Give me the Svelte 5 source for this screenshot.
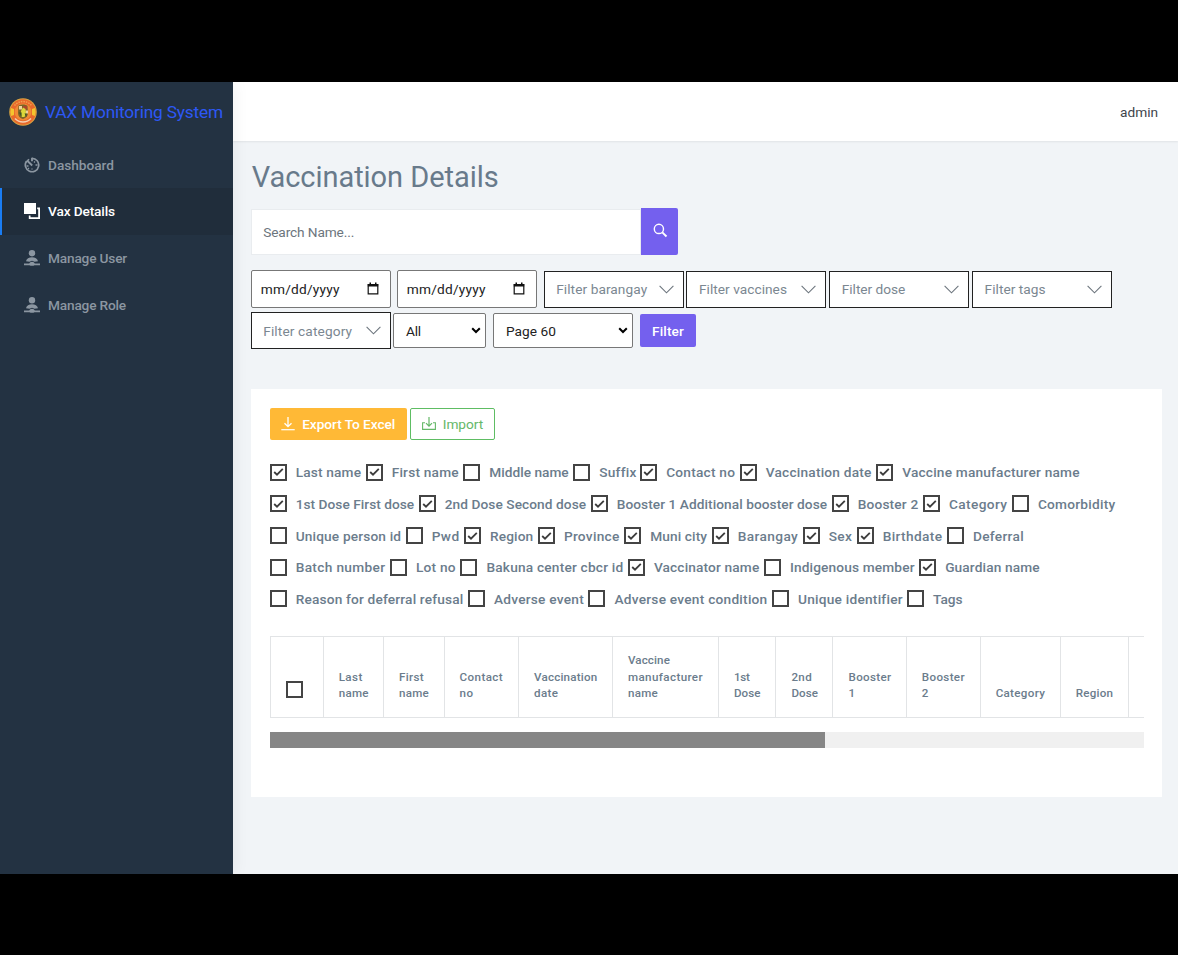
<script>
  const nav = [
    { label: 'Dashboard', icon: 'gauge', w: 66 },
    { label: 'Vax Details', icon: 'layers', w: 67, active: true },
    { label: 'Manage User', icon: 'person', w: 79 },
    { label: 'Manage Role', icon: 'person', w: 78 }
  ];

  const filters = [
    { label: 'Filter barangay', w: 91 },
    { label: 'Filter vaccines', w: 88 },
    { label: 'Filter dose', w: 63.5 },
    { label: 'Filter tags', w: 61 }
  ];

  // [label, slot width, checked]
  const rows = [
    [['Last name', 96, 1], ['First name', 97.6, 1], ['Middle name', 109.9, 0], ['Suffix', 67, 0], ['Contact no', 99.5, 1], ['Vaccination date', 136.5, 1], ['Vaccine manufacturer name', 208, 1]],
    [['1st Dose First dose', 149, 1], ['2nd Dose Second dose', 172, 1], ['Booster 1 Additional booster dose', 241, 1], ['Booster 2', 91.2, 1], ['Category', 89, 1], ['Comorbidity', 108, 0]],
    [['Unique person id', 136, 0], ['Pwd', 58.3, 0], ['Region', 73.9, 1], ['Province', 86.3, 1], ['Muni city', 87.5, 1], ['Barangay', 91, 1], ['Sex', 54, 1], ['Birthdate', 90.3, 1], ['Deferral', 81.5, 0]],
    [['Batch number', 120.2, 0], ['Lot no', 70.5, 0], ['Bakuna center cbcr id', 167.5, 0], ['Vaccinator name', 136, 1], ['Indigenous member', 155.3, 0], ['Guardian name', 125, 1]],
    [['Reason for deferral refusal', 198.3, 0], ['Adverse event', 120.5, 0], ['Adverse event condition', 183.5, 0], ['Unique identifier', 135, 0], ['Tags', 60, 0]]
  ];

  // column width, then [word, width] per line
  const columns = [
    [60.4, [['Last', 24], ['name', 30]]],
    [60.5, [['First', 25], ['name', 30]]],
    [74.4, [['Contact', 43.5], ['no', 14]]],
    [94, [['Vaccination', 63.5], ['date', 24.5]]],
    [106, [['Vaccine', 42], ['manufacturer', 75], ['name', 30]]],
    [57.5, [['1st', 15.5], ['Dose', 26.5]]],
    [57, [['2nd', 20.5], ['Dose', 26.5]]],
    [73.4, [['Booster', 43], ['1', 6]]],
    [73.8, [['Booster', 43], ['2', 7]]],
    [80, [['Category', 49.5]]],
    [68, [['Region', 37.5]]]
  ];

  // Tracks the letters so that a label fills the given width.
  function fit(node, width) {
    node.style.letterSpacing = '0px';
    const natural = node.getBoundingClientRect().width;
    node.style.letterSpacing = (width - natural) / node.textContent.length + 'px';
  }
</script>

{#snippet box(checked)}
  <span class="box">
    {#if checked}
      <svg width="11" height="10" viewBox="0 0 11 10"><path d="M1.2 5 4 7.7 9.8 1.8" fill="none" stroke="#3c3c3c" stroke-width="1.8" /></svg>
    {/if}
  </span>
{/snippet}

{#snippet dropdown(label, w)}
  <div class="filter">
    <span use:fit={w}>{label}</span>
    <svg width="15" height="9" viewBox="0 0 15 9"><path d="M.6.8 7.5 7.8 14.4.8" fill="none" stroke="#6c757d" stroke-width="1.1" /></svg>
  </div>
{/snippet}

{#snippet caret()}
  <svg width="10" height="7" viewBox="0 0 10 7"><path d="M1.2 1.2 5 5 8.8 1.2" fill="none" stroke="#000" stroke-width="2" /></svg>
{/snippet}

<div class="screen">
  <div class="app">
    <aside>
      <div class="brand">
        <svg width="28" height="28" viewBox="0 0 28 28">
          <circle cx="14" cy="14" r="13.8" fill="#d9a441" />
          <circle cx="14" cy="14" r="12.8" fill="#e8692c" />
          <path d="M2 10a12.6 12.6 0 0 0 0 8l3-1v-6zM26 10a12.6 12.6 0 0 1 0 8l-3-1v-6z" fill="#f4c52e" />
          <path d="M5.5 7.5A11 11 0 0 1 22.5 7.5" fill="none" stroke="#f0a050" stroke-width="1.5" stroke-dasharray="1.5 1" />
          <path d="M6 20.5A11 11 0 0 0 22 20.5" fill="none" stroke="#f5d0b0" stroke-width="1.6" />
          <circle cx="14" cy="14" r="8.4" fill="#f08a35" />
          <path d="M9.500 7.500c3-1.500 7-1.500 9 .5l.5 7c0 3-2 5-5 6-3-1-5-2.500-5-6z" fill="#7a6428" />
          <path d="M10 8h3v3.500h-3zM16.500 12.500h2.500v3h-2z" fill="#ecd29a" />
          <path d="M14 8h4v3.500h-4z" fill="#a9452c" />
          <path d="M12 13l2-3.500 2.500 1.500.500 4-1.500 4h-3z" fill="#dcd83a" />
          <path d="M10 14.500h2.500v4.500zM15.500 15.500h2v3.500z" fill="#3a5528" />
        </svg>
        <span use:fit={178}>VAX Monitoring System</span>
      </div>
      <nav>
        {#each nav as item}
          <div class="item" class:active={item.active}>
            {#if item.icon === 'gauge'}
              <svg width="16" height="16" viewBox="0 0 16 16" fill="none" stroke="currentColor">
                <path d="M8 1.3A6.7 6.700 0 1 1 2.500 4.200" stroke-width="1.700" />
                <path d="M8 .8v3.500M3 3.500 8.200 8.500" stroke-width="1.900" />
                <path d="M5 2.200 2 5.200" stroke-width="1.600" />
                <path d="M2.500 9h2M11.500 8h2M11 4.500l-1 1M8 11.500v1M5 11l-1 1" stroke-width="1.300" />
              </svg>
            {:else if item.icon === 'layers'}
              <svg width="16" height="16" viewBox="0 0 16 16" fill="currentColor"><path d="M0 0h12v11H0zM13.200 4.500H16V16H4.800v-3.600h1.700v1.900h7.700V6.200h-1z" /></svg>
            {:else}
              <svg width="16" height="16" viewBox="0 0 16 16" fill="currentColor"><circle cx="8" cy="3.200" r="3.200" /><path d="M2 11.300C2.500 8.600 5 7.300 8 7.300s5.500 1.300 6 4l-3.500.4L8 10.800l-2.500.9zM0 13.400h5.200a2.900 2.300 0 0 1 5.600 0H16v1.800h-5.500a3 1.500 0 0 1-5 0H0z" /></svg>
            {/if}
            <span use:fit={item.w}>{item.label}</span>
          </div>
        {/each}
      </nav>
    </aside>

    <div class="content">
      <header><span use:fit={38}>admin</span></header>
      <main>
        <h1><span use:fit={247}>Vaccination Details</span></h1>
        <div class="search">
          <div class="field"><span use:fit={91}>Search Name...</span></div>
          <div class="go">
            <svg width="15" height="15" viewBox="0 0 15 15" fill="none" stroke="#fff"><circle cx="5.900" cy="5.900" r="4.600" stroke-width="1.400" /><path d="m9.300 9.300 4.200 4.200" stroke-width="1.900" /></svg>
          </div>
        </div>

        <div class="line first">
          {#each [0, 1] as i (i)}
            <div class="date">
              <span use:fit={79}>mm/dd/yyyy</span>
              <svg width="12" height="13" viewBox="0 0 12 13"><path d="M1.200 2.500h9.600v9.300H1.200z" fill="none" stroke="#111" stroke-width="1.200" /><path d="M.8 2h10.400v2.500H.8zM2.500.5H4V3H2.500zM8 .5h1.500V3H8z" fill="#111" /></svg>
            </div>
          {/each}
          {#each filters as f}
            {@render dropdown(f.label, f.w)}
          {/each}
        </div>
        <div class="line second">
          {@render dropdown('Filter category', 89)}
          <div class="select all"><span use:fit={15}>All</span>{@render caret()}</div>
          <div class="select page"><span use:fit={50}>Page 60</span>{@render caret()}</div>
          <div class="apply"><span use:fit={32}>Filter</span></div>
        </div>

        <section>
          <div class="buttons">
            <div class="btn export">
              <svg width="14" height="14" viewBox="0 0 14 14" fill="none" stroke="currentColor"><path d="M7 0v9.500M3.500 6.200 7 9.700l3.500-3.500" stroke-width="1.300" /><path d="M.3 12.700h13.400" stroke-width="1.200" /></svg>
              <span use:fit={93}>Export To Excel</span>
            </div>
            <div class="btn import">
              <svg width="14" height="14" viewBox="0 0 14 14" fill="none" stroke="currentColor"><path d="M7 0v9M4 6.200l3 3 3-3" stroke-width="1.200" /><path d="M3 5.800H.6v6.600h12.800V5.800H11" stroke-width="1.100" /></svg>
              <span use:fit={40.5}>Import</span>
            </div>
          </div>

          <div class="checks">
            {#each rows as row}
              <div class="check-row">
                {#each row as [label, w, on]}
                  <label style:width="{w}px">{@render box(on)}<span use:fit={w - 30.5}>{label}</span></label>
                {/each}
              </div>
            {/each}
          </div>

          <div class="table">
            <div class="th pick">{@render box(0)}</div>
            {#each columns as [w, words]}
              <div class="th" style:width="{w}px">
                {#each words as [word, ww]}
                  <span use:fit={ww}>{word}</span>
                {/each}
              </div>
            {/each}
            <div class="th rest"></div>
          </div>
          <div class="scroll"><div class="thumb"></div></div>
        </section>
      </main>
    </div>
  </div>
</div>

<style>
  :global(body) { background: #000; }
  * { box-sizing: border-box; }
  .screen { height: 955px; padding: 82px 0 81px; background: #000; overflow: hidden; font-family: Roboto, sans-serif; font-size: 13.700px; color: #6b7d8e; }
  .screen span { white-space: nowrap; }
  svg { display: block; flex: none; }
  .app { display: flex; height: 792px; background: #f1f4f7; }
  aside { width: 232.500px; flex: none; background: #233242; box-shadow: 1px 0 16px rgba(0, 0, 0, .06); z-index: 1; }
  .brand { display: flex; align-items: center; gap: 8px; height: 59.500px; padding-left: 9px; font-size: 17.300px; color: #2d58f5; }
  .item { display: flex; align-items: center; gap: 8px; height: 46.600px; padding-left: 24px; font-weight: 500; color: #8b96a1; }
  .item.active { padding-left: 22px; border-left: 2px solid #1a7df4; background: #202d3b; color: #fff; }
  .content { flex: 1; min-width: 0; }
  header { display: flex; align-items: center; justify-content: flex-end; height: 59px; padding-right: 20px; background: #fff; color: #3e444b; box-shadow: 0 1px 2px rgba(0, 0, 0, .07); }
  main { padding: 0 0 0 18.200px; }
  h1 { margin: 0; height: 67px; padding: 18px 0 0 1px; font-size: 29px; line-height: 36px; font-weight: 400; color: #687a8b; }
  .search { display: flex; height: 47px; }
  .field { display: flex; align-items: center; width: 390px; height: 46px; margin-top: 1px; padding: 0 0 1px 11.500px; background: #fff; border: 1px solid #e9ecef; color: #6c757d; }
  .go { width: 37.500px; height: 47px; padding: 15px 0 0 12px; border-radius: 0 2px 2px 0; background: #7460ee; }
  .line { display: flex; align-items: center; }
  .first { height: 38px; margin-top: 15px; }
  .date { display: flex; justify-content: space-between; align-items: center; width: 140px; height: 38px; padding: 0 11px 1px 9px; margin-right: 6px; background: #fff; border: 1px solid #777; border-radius: 2px; color: #222; }
  .date + .filter { margin-left: 1px; }
  .filter { display: flex; justify-content: space-between; align-items: center; width: 140px; height: 37px; margin-right: 2.800px; padding: 0 9px 0 11.500px; background: #fff; border: 1px solid #222; color: #7b8791; }
  .first .filter { margin-top: 1px; padding-bottom: 1px; }
  .second { height: 37px; margin-top: 4px; }
  .select { display: flex; justify-content: space-between; align-items: center; height: 35px; background: #fff; border: 1px solid #777; border-radius: 2px; color: #222; padding: 0 4px 0 11.500px; }
  .all { width: 93px; margin-right: 7px; }
  .page { width: 140px; margin-right: 6.500px; }
  .apply { display: flex; align-items: center; justify-content: center; width: 56px; height: 33px; border-radius: 2px; background: #7460ee; color: #fff; font-weight: 500; }
  section { width: 911px; height: 408px; margin-top: 40px; padding: 19px 18px 0 19px; background: #fff; }
  .buttons { display: flex; gap: 3px; height: 32px; }
  .btn { display: flex; align-items: center; gap: 7px; padding: 0 0 1px 11.500px; border-radius: 2px; }
  .export { width: 137px; background: #ffb936; color: #fff; font-weight: 500; }
  .import { width: 85px; padding-left: 11px; border: 1px solid #5ebd63; color: #65b868; }
  .checks { margin-top: 16.300px; }
  .check-row { display: flex; height: 31.700px; font-weight: 500; color: #6b7c8c; }
  label { display: flex; align-items: center; gap: 9px; flex: none; }
  .box { display: flex; align-items: center; justify-content: center; width: 17px; height: 17px; flex: none; border: 2px solid #444; background: #fff; }
  .table { display: flex; width: 874px; height: 82px; margin-top: 21.200px; border: 1px solid #e2e4e6; border-right: 0; overflow: hidden; }
  .th { display: flex; flex-direction: column; align-items: flex-start; justify-content: flex-end; flex: none; padding: 0 0 15px 15px; border-right: 1px solid #e2e4e6; font-size: 11.600px; line-height: 16.700px; font-weight: 500; color: #6b7c8c; }
  .pick { width: 53px; padding-bottom: 18.500px; }
  .rest { width: 80px; }
  .scroll { width: 874px; height: 16px; margin-top: 14px; background: #f0f0f0; }
  .thumb { width: 555px; height: 16px; background: #868686; }
</style>
